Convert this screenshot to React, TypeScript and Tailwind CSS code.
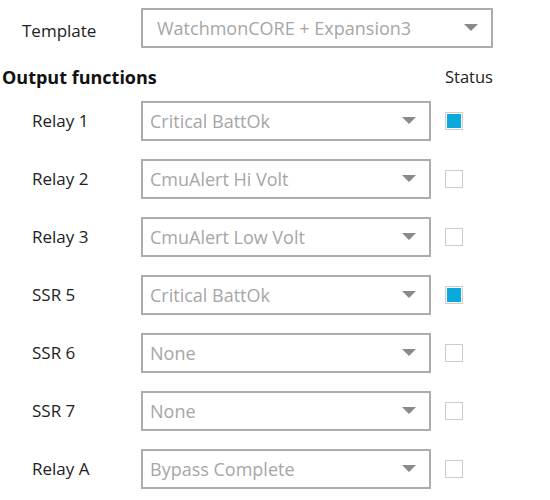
import React from "react";

const rows = [
  { label: "Relay 1", value: "Critical BattOk", on: true },
  { label: "Relay 2", value: "CmuAlert Hi Volt", on: false },
  { label: "Relay 3", value: "CmuAlert Low Volt", on: false },
  { label: "SSR 5", value: "Critical BattOk", on: true },
  { label: "SSR 6", value: "None", on: false },
  { label: "SSR 7", value: "None", on: false },
  { label: "Relay A", value: "Bypass Complete", on: false },
];

function Arrow() {
  return (
    <svg width="14" height="8" viewBox="0 0 14 8" className="shrink-0">
      <path d="M0 0 L14 0 L7 7 Z" fill="#8a8a8a" />
    </svg>
  );
}

function Select({ value, w, pl }: { value: string; w: string; pl: string }) {
  return (
    <div
      className={`${w} ${pl} h-[40px] border-2 border-[#acacac] bg-white flex items-center justify-between pr-[13px] text-[18px] text-[#a6a6a6]`}
    >
      <span>{value}</span>
      <Arrow />
    </div>
  );
}

function Check({ on }: { on: boolean }) {
  return (
    <div className="w-[18px] h-[18px] border border-[#cccccc] p-[1px] bg-white">
      {on && <div className="w-full h-full bg-[#0ba8dc]" />}
    </div>
  );
}

export default function App() {
  return (
    <div
      className="w-[550px] h-[500px] bg-white text-[#222] overflow-hidden"
      style={{ fontFamily: '"Open Sans", "Noto Sans", sans-serif' }}
    >
      <div className="flex items-center pt-[8px]">
        <div className="w-[141px] pl-[22px] pt-[6px] text-[17px]">Template</div>
        <Select value="WatchmonCORE + Expansion3" w="w-[352px]" pl="pl-[14px]" />
      </div>
      <div className="flex items-center mt-[17px] h-[24px]">
        <div className="w-[445px] pl-[2px] text-[18px] font-bold text-[#111]">Output functions</div>
        <div className="text-[16.5px]">Status</div>
      </div>
      <div className="flex flex-col gap-[18px] mt-[12px]">
        {rows.map((r) => (
          <div key={r.label} className="flex items-center">
            <div className="w-[141px] pl-[32px] text-[17px]">{r.label}</div>
            <Select value={r.value} w="w-[290px]" pl="pl-[7px]" />
            <div className="ml-[14px]">
              <Check on={r.on} />
            </div>
          </div>
        ))}
      </div>
    </div>
  );
}
